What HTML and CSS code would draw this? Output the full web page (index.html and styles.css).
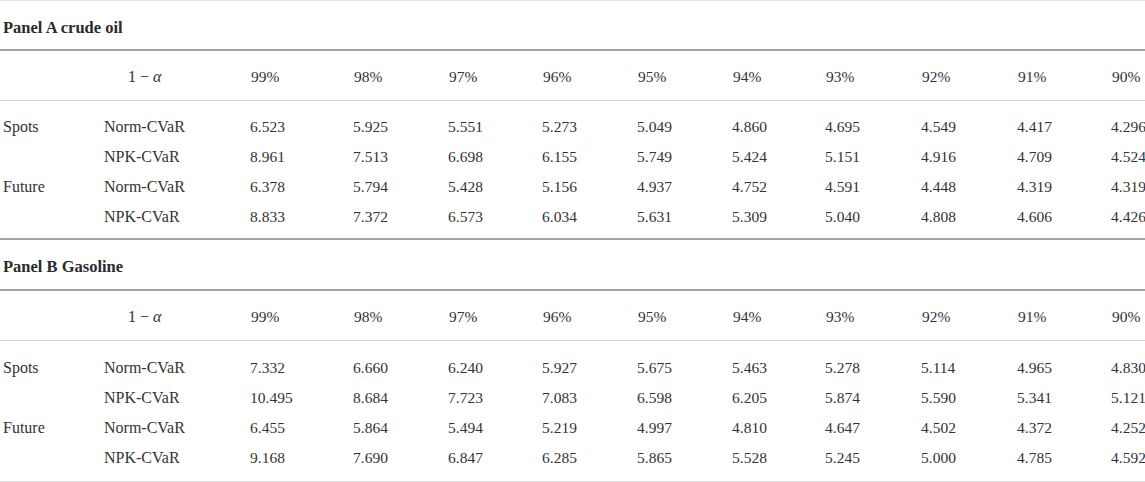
FILE: index.html
```html
<!DOCTYPE html>
<html>
<head>
<meta charset="utf-8">
<link rel="stylesheet" href="styles.css">
</head>
<body>
<div class="table">
  <section class="panel panel-a">
    <div class="panel-title">Panel A crude oil</div>
    <div class="row head">
      <span></span><span class="alpha">1 − <i>α</i></span>
      <span>99%</span><span>98%</span><span>97%</span><span>96%</span><span>95%</span><span>94%</span><span>93%</span><span>92%</span><span>91%</span><span>90%</span>
    </div>
    <div class="body">
      <div class="row"><span>Spots</span><span>Norm-CVaR</span><span>6.523</span><span>5.925</span><span>5.551</span><span>5.273</span><span>5.049</span><span>4.860</span><span>4.695</span><span>4.549</span><span>4.417</span><span>4.296</span></div>
      <div class="row"><span></span><span>NPK-CVaR</span><span>8.961</span><span>7.513</span><span>6.698</span><span>6.155</span><span>5.749</span><span>5.424</span><span>5.151</span><span>4.916</span><span>4.709</span><span>4.524</span></div>
      <div class="row"><span>Future</span><span>Norm-CVaR</span><span>6.378</span><span>5.794</span><span>5.428</span><span>5.156</span><span>4.937</span><span>4.752</span><span>4.591</span><span>4.448</span><span>4.319</span><span>4.319</span></div>
      <div class="row"><span></span><span>NPK-CVaR</span><span>8.833</span><span>7.372</span><span>6.573</span><span>6.034</span><span>5.631</span><span>5.309</span><span>5.040</span><span>4.808</span><span>4.606</span><span>4.426</span></div>
    </div>
  </section>
  <section class="panel panel-b">
    <div class="panel-title">Panel B Gasoline</div>
    <div class="row head">
      <span></span><span class="alpha">1 − <i>α</i></span>
      <span>99%</span><span>98%</span><span>97%</span><span>96%</span><span>95%</span><span>94%</span><span>93%</span><span>92%</span><span>91%</span><span>90%</span>
    </div>
    <div class="body">
      <div class="row"><span>Spots</span><span>Norm-CVaR</span><span>7.332</span><span>6.660</span><span>6.240</span><span>5.927</span><span>5.675</span><span>5.463</span><span>5.278</span><span>5.114</span><span>4.965</span><span>4.830</span></div>
      <div class="row"><span></span><span>NPK-CVaR</span><span>10.495</span><span>8.684</span><span>7.723</span><span>7.083</span><span>6.598</span><span>6.205</span><span>5.874</span><span>5.590</span><span>5.341</span><span>5.121</span></div>
      <div class="row"><span>Future</span><span>Norm-CVaR</span><span>6.455</span><span>5.864</span><span>5.494</span><span>5.219</span><span>4.997</span><span>4.810</span><span>4.647</span><span>4.502</span><span>4.372</span><span>4.252</span></div>
      <div class="row"><span></span><span>NPK-CVaR</span><span>9.168</span><span>7.690</span><span>6.847</span><span>6.285</span><span>5.865</span><span>5.528</span><span>5.245</span><span>5.000</span><span>4.785</span><span>4.592</span></div>
    </div>
  </section>
</div>
</body>
</html>
```
FILE: styles.css
```css
html, body {
  margin: 0;
  padding: 0;
  background: #fff;
}
body {
  font-family: "Liberation Serif", "Times New Roman", serif;
  font-size: 16px;
  color: #333;
}
.table {
  width: 1145px;
  border-top: 1px solid #e6e6e6;
  border-bottom: 1px solid #dcdcdc;
}
.panel-title {
  font-weight: bold;
  font-size: 16.5px;
  line-height: 20px;
  padding: 17px 3px 11px;
  color: #2a2a2a;
}
.panel-b .panel-title {
  padding-top: 17px;
  padding-bottom: 12px;
}
.row {
  display: grid;
  grid-template-columns: 101px 147px 103px 95px 94px 95px 95px 93px 96px 96px 94px 36px;
  line-height: 30px;
  white-space: nowrap;
}
.row span {
  padding-left: 3px;
}
.row span:nth-child(n+3) {
  padding-left: 2px;
  font-size: 15.5px;
}
.head {
  border-top: 2px solid #a3a3a3;
  border-bottom: 1px solid #cfcfcf;
  padding: 11px 0 8px;
}
.head span:nth-child(n+3) {
  padding-left: 3px;
}
.alpha {
  padding-left: 27px !important;
}
.alpha i {
  font-style: italic;
}
.body {
  padding: 11px 0 6px;
}
.panel-b .body {
  padding: 12px 0 8px;
}
.panel-b {
  border-top: 2px solid #a3a3a3;
}
```
